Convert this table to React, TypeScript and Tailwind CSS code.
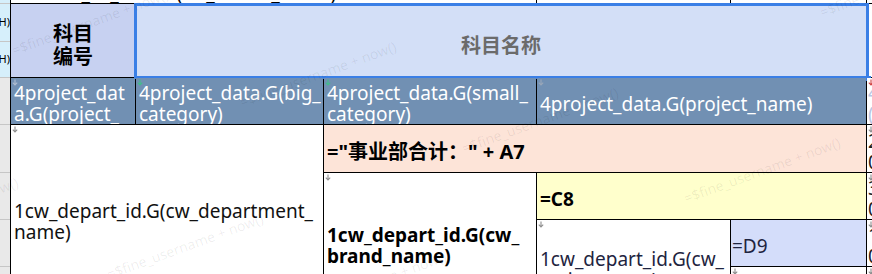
import React from "react";

const sans = "font-['Noto_Sans','Noto_Sans_CJK_SC',sans-serif]";
const cjk = "font-['Noto_Sans_CJK_SC','Noto_Sans',sans-serif]";

function Arrow({ color = "#8d8d8d" }: { color?: string }) {
  return (
    <svg
      className="absolute left-[1px] top-[1px]"
      width="6"
      height="7"
      viewBox="0 0 6 7"
      fill="none"
    >
      <path d="M3 0.5V6M0.8 3.6L3 6L5.2 3.6" stroke={color} strokeWidth="1.1" />
    </svg>
  );
}

function Cell({
  className = "",
  children,
  mark,
}: {
  className?: string;
  children?: React.ReactNode;
  mark?: string;
}) {
  return (
    <div
      className={`relative flex items-center overflow-hidden pt-[6px] px-[3px] text-[19px] leading-[21px] ${className}`}
    >
      {mark && <Arrow color={mark} />}
      <div className="whitespace-nowrap">{children}</div>
    </div>
  );
}

const watermarks = [
  { x: 90, y: 22 },
  { x: 318, y: 74 },
  { x: 540, y: 120 },
  { x: 762, y: 170 },
  { x: -60, y: 210 },
  { x: 185, y: 246 },
  { x: 368, y: 284 },
  { x: 898, y: -16 },
  { x: 676, y: -30 },
];

export default function App() {
  return (
    <div className={`relative w-[872px] h-[274px] overflow-hidden bg-white text-black ${sans}`}>
      <div className="flex items-start">
        {/* row ruler */}
        <div className="flex flex-col gap-px bg-[#c6c6c6] w-[10px] shrink-0">
          <div className="h-[3px] bg-[#d6effb]" />
          <div className="h-[37px] bg-[#d6effb] flex items-center justify-end overflow-hidden text-[11px] whitespace-nowrap">
            (H)
          </div>
          <div className="h-[35px] bg-[#d6effb] flex items-center justify-end overflow-hidden text-[11px] whitespace-nowrap">
            (H)
          </div>
          <div className="h-[46px] bg-[#e9e9e9]" />
          <div className="h-[47px] bg-[#e9e9e9]" />
          <div className="h-[46px] bg-[#e9e9e9]" />
          <div className="h-[46px] bg-[#e9e9e9]" />
          <div className="h-[46px] bg-[#e9e9e9]" />
        </div>
        <div className="w-px h-[313px] bg-black shrink-0" />

        <div className="grid gap-px bg-black grid-cols-[124px_187px_212px_193px_135px_20px] grid-rows-[3px_73px_46px_47px_46px_46px_46px]">
          {/* row 0, mostly scrolled away */}
          <div className="col-span-3 bg-white overflow-hidden px-[3px] text-[19px] leading-[21px] whitespace-nowrap">
            <div className="-mt-[17px]">1dealer_all_data.G(cw_dealer_name)</div>
          </div>
          <div className="bg-white" />
          <div className="bg-white" />
          <div className="bg-white" />

          {/* header */}
          <div className={`flex flex-col items-center justify-center pt-[6px] bg-[#c7d1f1] text-[20px] leading-[23px] font-bold ${cjk}`}>
            <span>科目</span>
            <span>编号</span>
          </div>
          <div className={`relative col-span-4 flex items-center justify-center pt-[8px] bg-[#d3dff7] text-[20px] font-bold text-[#6b6b6b] ${cjk}`}>
            科目名称
            <div className="absolute -left-[2px] -right-[3px] -top-[1px] -bottom-[2px] border-[3px] border-[#3a7fe6]" />
            <div className="absolute -right-[5px] -bottom-[4px] w-[5px] h-[5px] bg-[#3a7fe6]" />
          </div>
          <div className="bg-white" />

          {/* row 3 */}
          <Cell className="bg-[#7190b3] text-white" mark="#b0bdd0">
            4project_dat
            <br />
            a.G(project_
          </Cell>
          <Cell className="bg-[#7190b3] text-white" mark="#3fbf8a">
            4project_data.G(big_
            <br />
            category)
          </Cell>
          <Cell className="bg-[#7190b3] text-white" mark="#3fbf8a">
            4project_data.G(small_
            <br />
            category)
          </Cell>
          <Cell className="col-span-2 bg-[#7190b3] text-white" mark="#9aa7b8">
            4project_data.G(project_name)
          </Cell>
          <Cell className="bg-white text-[#b9c7e3] !px-[1px]" mark="#d04040">
            4
            <br />(
          </Cell>

          {/* row 4 */}
          <Cell className="col-span-2 row-span-4 bg-white text-[#111]" mark="#8d8d8d">
            1cw_depart_id.G(cw_department_
            <br />
            name)
          </Cell>
          <Cell className="col-span-3 bg-[#fde4d8] font-bold !text-[20px]">
            ="事业部合计：" + A7
          </Cell>
          <Cell className="bg-white text-[#222] !px-[1px]" mark="#8d8d8d">
            2
            <br />0
          </Cell>

          {/* row 5 */}
          <Cell className="row-span-3 bg-white font-bold" mark="#8d8d8d">
            1cw_depart_id.G(cw_
            <br />
            brand_name)
          </Cell>
          <Cell className="col-span-2 bg-[#ffffcc] font-bold">=C8</Cell>
          <Cell className="bg-white text-[#222] !px-[1px]" mark="#8d8d8d">
            3
            <br />0
          </Cell>

          {/* row 6 */}
          <Cell className="row-span-2 bg-white text-[#1e2440]" mark="#8d8d8d">
            1cw_depart_id.G(cw_
            <br />
            series_name)
          </Cell>
          <Cell className="bg-[#d4ddfa] text-[#1e2440] !px-[1px]">=D9</Cell>
          <Cell className="bg-white text-[#222] !px-[1px]" mark="#8d8d8d">
            1
            <br />0
          </Cell>

          {/* row 7 */}
          <Cell className="bg-white" mark="#8d8d8d" />
          <Cell className="bg-white" mark="#8d8d8d" />
        </div>
      </div>

      {/* watermark */}
      {watermarks.map((w, i) => (
        <span
          key={i}
          className="pointer-events-none absolute -translate-x-1/2 -translate-y-1/2 -rotate-[20deg] whitespace-nowrap text-[14px] text-black/[0.07]"
          style={{ left: w.x, top: w.y }}
        >
          =$fine_username + now()
        </span>
      ))}
    </div>
  );
}
